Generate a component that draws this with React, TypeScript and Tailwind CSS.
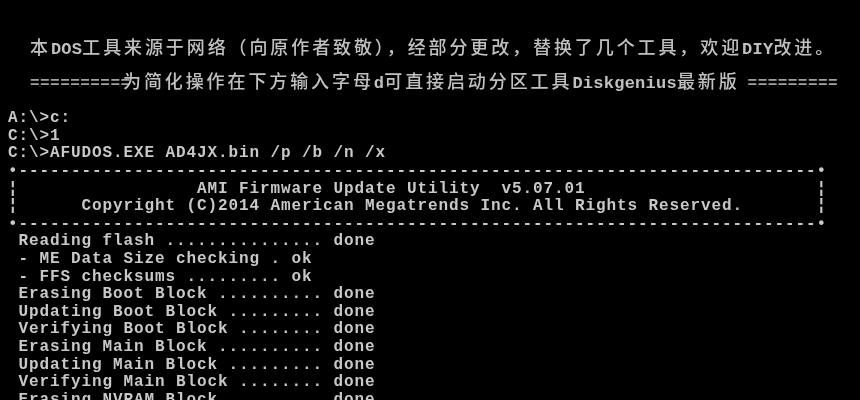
import React from "react";

const CJK = "'Noto Sans CJK SC', 'Noto Sans', sans-serif";
const MONO = "'Liberation Mono', 'DejaVu Sans Mono', monospace";

function Cjk({ children }: { children: React.ReactNode }) {
  return (
    <span className="text-[18px] leading-[34px] tracking-[2.9px] font-['Noto_Sans_CJK_SC',sans-serif] font-medium">
      {children}
    </span>
  );
}

function Asc({ children }: { children: React.ReactNode }) {
  return (
    <span className="text-[17px] leading-[34px] tracking-[0.25px] font-['Liberation_Mono',monospace] font-bold">
      {children}
    </span>
  );
}

function Eq({ children, w }: { children: React.ReactNode; w: string }) {
  return (
    <span
      className={
        "leading-[34px] text-[16px] tracking-[0.45px] font-['Liberation_Mono',monospace] font-bold text-[#a0a0a0] " +
        w
      }
    >
      {children}
    </span>
  );
}

const border = "•" + "-".repeat(76) + "•";
const boxRow = (indent: number, text: string) =>
  ("¦" + " ".repeat(indent) + text).padEnd(77, " ") + "¦";

const lines: string[] = [
  "A:\\>c:",
  "C:\\>1",
  "C:\\>AFUDOS.EXE AD4JX.bin /p /b /n /x",
  border,
  boxRow(17, "AMI Firmware Update Utility  v5.07.01"),
  boxRow(6, "Copyright (C)2014 American Megatrends Inc. All Rights Reserved."),
  border,
  " Reading flash ............... done",
  " - ME Data Size checking . ok",
  " - FFS checksums ......... ok",
  " Erasing Boot Block .......... done",
  " Updating Boot Block ......... done",
  " Verifying Boot Block ........ done",
  " Erasing Main Block .......... done",
  " Updating Main Block ......... done",
  " Verifying Main Block ........ done",
  " Erasing NVRAM Block ......... done",
];

export default function App() {
  return (
    <div
      className="w-[860px] h-[400px] bg-black overflow-hidden text-[#c8c8c8] blur-[0.35px]"
      style={{ fontFamily: MONO }}
    >
      <div
        className="pt-[28.5px] pl-[30px] whitespace-pre text-[#c0c0c0]"
        style={{ fontFamily: CJK }}
      >
        <div className="flex items-baseline h-[34px]">
          <Cjk>本</Cjk>
          <Asc>DOS</Asc>
          <Cjk>工具来源于网络（向原作者致敬），经部分更改，替换了几个工具，欢迎</Cjk>
          <Asc>DIY</Asc>
          <Cjk>改进。</Cjk>
        </div>
        <div className="flex items-baseline h-[34px]">
          <Eq w="w-[93px]">==========</Eq>
          <Cjk>为简化操作在下方输入字母</Cjk>
          <Asc>d</Asc>
          <Cjk>可直接启动分区工具</Cjk>
          <Asc>Diskgenius</Asc>
          <Cjk>最新版</Cjk>
          <Eq w="pl-[8px]">=========</Eq>
        </div>
      </div>
      <div className="mt-[13.7px] pl-[8px] leading-[17.6px] text-[16px] tracking-[0.9px] font-bold whitespace-pre">
        {lines.map((l, i) => (
          <div key={i}>{l}</div>
        ))}
      </div>
    </div>
  );
}
